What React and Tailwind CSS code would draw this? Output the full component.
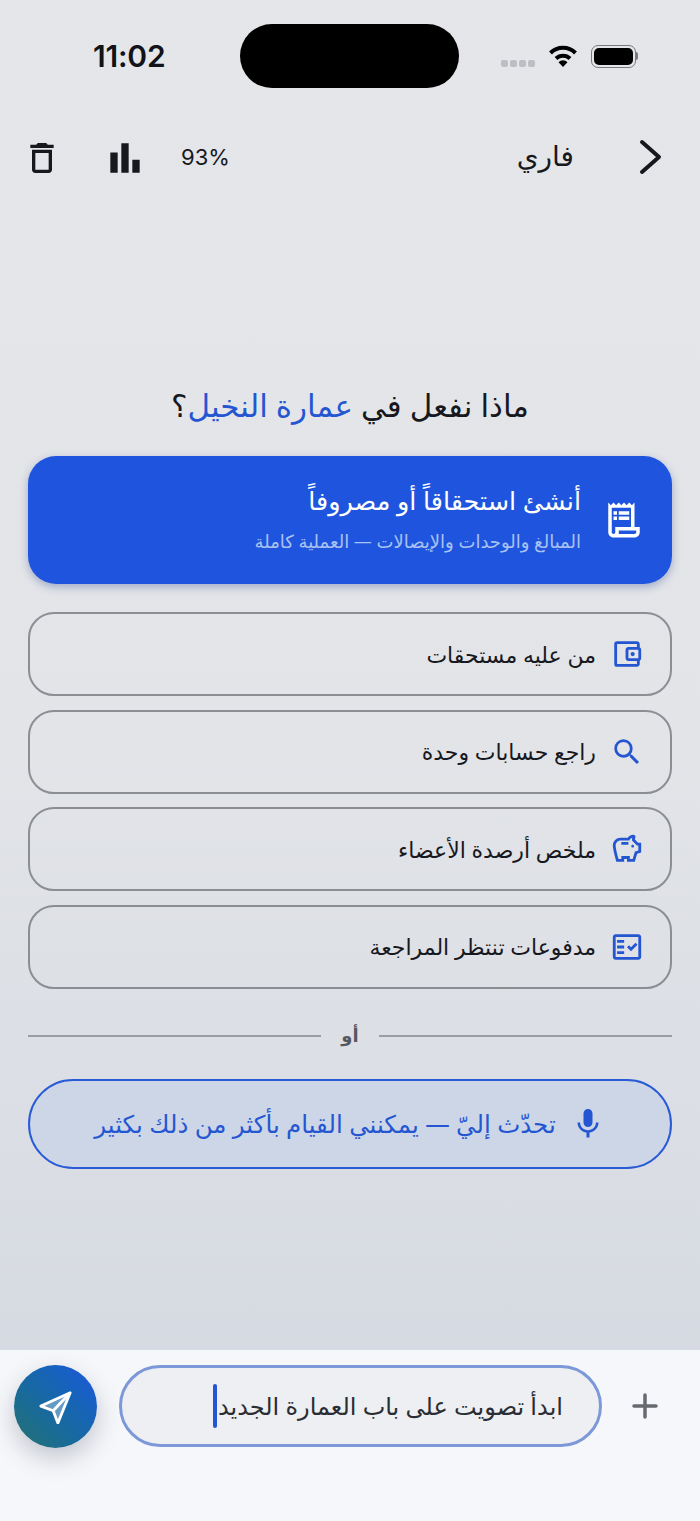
import { MdOutlineReceiptLong, MdOutlineFactCheck, MdOutlineSavings, MdOutlineAccountBalanceWallet, MdSearch, MdOutlineDelete, MdBarChart, MdMic } from "react-icons/md"

const arabic = "font-['Noto_Sans','DejaVu_Sans',sans-serif]"

const actions = [
    { label: "من عليه مستحقات", Icon: MdOutlineAccountBalanceWallet },
    { label: "راجع حسابات وحدة", Icon: MdSearch },
    { label: "ملخص أرصدة الأعضاء", Icon: MdOutlineSavings },
    { label: "مدفوعات تنتظر المراجعة", Icon: MdOutlineFactCheck },
]

const StatusBar = () => (
    <div className="h-[88px] pt-6 flex items-center pl-[93px] pr-[62px]">
        <div className="w-[147px] mt-[1px] text-[30px] font-semibold text-[#111318] font-['Inter',sans-serif] tracking-[-0.2px]">11:02</div>
        <div className="w-[219px] h-16 rounded-full bg-black"></div>
        <div className="flex-1 flex items-center justify-end gap-[13px]">
            <div className="flex gap-[2px] mt-[14px]">
                <span className="w-[7px] h-[7px] rounded-[2px] bg-[#bcbec3]"></span>
                <span className="w-[7px] h-[7px] rounded-[2px] bg-[#bcbec3]"></span>
                <span className="w-[7px] h-[7px] rounded-[2px] bg-[#bcbec3]"></span>
                <span className="w-[7px] h-[7px] rounded-[2px] bg-[#bcbec3]"></span>
            </div>
            <svg width="30" height="24" viewBox="0 0 30 24" fill="none" stroke="#000" strokeWidth="4">
                <path d="M2.5 9a17.5 17.5 0 0 1 25 0" />
                <path d="M8 14.5a10 10 0 0 1 14 0" />
                <path d="M15 23l-4.500-4.800a6.300 6.300 0 0 1 9 0z" fill="#000" stroke="none" />
            </svg>
            <div className="flex items-center">
                <div className="w-[45px] h-[23px] rounded-[7px] border-[1.500px] border-[#77797d] p-[2px]">
                    <div className="w-full h-full rounded-[5px] bg-black"></div>
                </div>
                <div className="w-[2px] h-2 rounded-r-full bg-[#77797d]"></div>
            </div>
        </div>
    </div>
)

const Toolbar = () => (
    <div className="mt-[46px] h-12 flex items-center pl-[22px] pr-[36px] text-[#16181d]">
        <MdOutlineDelete size={40} className="-scale-x-100" />
        <MdBarChart size={44} className="ml-[41px]" />
        <span className="ml-[34px] -mt-[2px] text-[22px] font-['Inter',sans-serif]">93%</span>
        <span dir="rtl" className={`ml-auto -mt-[6px] text-[28px] ${arabic}`}>فاري</span>
        <svg width="26" height="36" viewBox="0 0 26 36" fill="none" stroke="#16181d" strokeWidth="4" strokeLinecap="round" strokeLinejoin="round" className="ml-[64px] -mt-[2px]">
            <path d="M4 3l17 15L4 33" />
        </svg>
    </div>
)

const ActionRow = ({ label, Icon }) => (
    <button className="h-[84px] flex items-center gap-[14px] pr-[26px] rounded-[26px] border-2 border-[#8b8e93]">
        <Icon size={34} color="#2556d2" />
        <span className={`text-[22px] font-medium text-[#16181d] ${arabic}`}>{label}</span>
    </button>
)

const App = () => (
    <div className="w-[700px] h-[1521px] flex flex-col overflow-hidden bg-gradient-to-b from-[#e5e6e9] via-[#e2e4e8] to-[#d3d7e0]">
        <StatusBar />
        <Toolbar />
        <div dir="rtl" className="flex-1 px-[28px] flex flex-col">
            <h1 className={`mt-[201px] text-center text-[31px] leading-[44px] font-medium text-[#16181d] ${arabic}`}>
                ماذا نفعل في <span className="text-[#2556d2]">عمارة النخيل</span>؟
            </h1>
            <div className="mt-[29px] h-[128px] flex items-center gap-[22px] pr-[27px] rounded-[28px] bg-[#1f55de] shadow-[0_3px_8px_rgba(30,60,140,0.35)]">
                <MdOutlineReceiptLong size={42} color="#fff" className="-scale-x-100" />
                <div className="flex flex-col gap-[10px] pb-[6px]">
                    <span className={`text-[25.500px] leading-[38px] text-white ${arabic}`}>أنشئ استحقاقاً أو مصروفاً</span>
                    <span className={`text-[18px] leading-[24px] text-[#a9c2f2] ${arabic}`}>المبالغ والوحدات والإيصالات — العملية كاملة</span>
                </div>
            </div>
            <div className="mt-[28px] flex flex-col gap-[13.667px]">
                {actions.map((a) => (
                    <ActionRow key={a.label} label={a.label} Icon={a.Icon} />
                ))}
            </div>
            <div className="mt-[33px] h-7 flex items-center gap-[20px]">
                <div className="flex-1 h-[2px] bg-[#9a9da2]"></div>
                <span className={`text-[18px] font-semibold text-[#55585e] ${arabic}`}>أو</span>
                <div className="flex-1 h-[2px] bg-[#9a9da2]"></div>
            </div>
            <button className="mt-[29px] h-[90px] flex items-center justify-center gap-[14px] rounded-full border-2 border-[#2a5bd7] bg-[#ccd6e6]">
                <MdMic size={36} color="#2556d2" />
                <span className={`text-[24.500px] text-[#2556d2] ${arabic}`}>تحدّث إليّ — يمكنني القيام بأكثر من ذلك بكثير</span>
            </button>
        </div>
        <div className="h-[171px] bg-[#f6f7fa] flex items-start pt-[15px] pl-[14px] gap-[22px]">
            <button className="w-[83px] h-[83px] shrink-0 rounded-full flex items-center justify-center bg-gradient-to-bl from-[#1f55de] to-[#26706e] shadow-[0_10px_24px_rgba(40,50,80,0.25)]">
                <svg width="34" height="34" viewBox="0 0 36 36" fill="#ffffff55" stroke="#fff" strokeWidth="3" strokeLinejoin="round">
                    <path d="M33 3L2 17l13 5 5 13z" />
                    <path d="M33 3L15 22" fill="none" />
                </svg>
            </button>
            <div dir="rtl" className="w-[483px] h-[82px] flex items-center pr-[36px] rounded-full border-[3px] border-[#7d98d8] bg-[#edeff2]">
                <span className={`text-[24px] text-[#2a2d33] ${arabic}`}>ابدأ تصويت على باب العمارة الجديد</span>
                <span className="w-[4px] h-[44px] mr-[1px] rounded-full bg-[#2556d2]"></span>
            </div>
            <svg width="26" height="26" viewBox="0 0 26 26" stroke="#66696e" strokeWidth="3.500" strokeLinecap="round" className="mt-[28px] ml-[8px] shrink-0">
                <path d="M13 2v22M2 13h22" />
            </svg>
        </div>
    </div>
)

export default App
